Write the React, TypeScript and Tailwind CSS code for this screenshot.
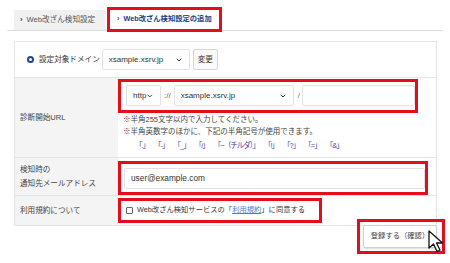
import React from "react";
import { ChevronDown } from "lucide-react";

const font = {
  fontFamily: '"Liberation Sans", "Noto Sans CJK JP", sans-serif',
};

function Select({ value, className }: { value: string; className: string }) {
  return (
    <div
      className={`flex items-center justify-between bg-white border border-[#e2e2e2] rounded-[2px] px-[6px] text-[8px] text-[#333] ${className}`}
    >
      <span>{value}</span>
      <ChevronDown className="w-[8px] h-[8px] text-[#333]" strokeWidth={3} />
    </div>
  );
}

function Cursor() {
  return (
    <svg
      className="absolute left-[428px] top-[230px]"
      width="18"
      height="24"
      viewBox="0 0 18 24"
    >
      <path
        d="M1 1 L1 18 L5.5 14 L9 21.5 L12 20 L8.5 13 L14.5 13 Z"
        fill="#fff"
        stroke="#111"
        strokeWidth="1.3"
        strokeLinejoin="round"
      />
    </svg>
  );
}

const symbols = [".", "-", "_", "/", "~（チルダ）", "!", "?", "=", "&"];

export default function App() {
  return (
    <div
      className="relative w-[450px] h-[263px] bg-white overflow-hidden text-[#444]"
      style={font}
    >
      {/* tabs */}
      <div className="mt-[10px] mx-[7px] h-[21px] flex items-end border-b border-[#dcdcdc] pl-[7px]">
        <div className="w-[92px] h-[20px] bg-[#f1f1f1] flex items-center pl-[6px] gap-[4px] text-[7.6px] text-[#555] whitespace-nowrap">
          <span className="text-[#24408a] font-bold">›</span>
          <span>Web改ざん検知設定</span>
        </div>
        <div className="ml-px w-[115px] flex-none h-[25px] -mb-[2px] border-[3px] border-[#e60d1a] bg-white flex items-center pl-[7px] gap-[4px] text-[7.3px] font-bold text-[#1e3d80] whitespace-nowrap">
          <span>›</span>
          <span>Web改ざん検知設定の追加</span>
        </div>
      </div>

      {/* panel */}
      <div className="mt-[10px] ml-[14px] w-[423px] border border-[#e4e4e4]">
        <div className="h-[35px] flex items-center pl-[12px]">
          <span className="w-[7px] h-[7px] rounded-full border-[2px] border-[#1f4690]" />
          <span className="ml-[5px] text-[7.6px] text-[#333]">設定対象ドメイン</span>
          <Select value="xsample.xsrv.jp" className="ml-[2px] w-[88px] h-[21px]" />
          <div className="ml-[3px] w-[25px] h-[21px] border border-[#d6d6d6] rounded-[2px] bg-[#fafafa] flex items-center justify-center text-[7.6px] text-[#333]">
            変更
          </div>
        </div>

        <div className="grid grid-cols-[103px_1fr] border-t border-[#e4e4e4]">
          {/* row 1 */}
          <div className="bg-[#f4f4f4] flex items-center pl-[5px] text-[7.6px] border-b border-[#e4e4e4]">
            診断開始URL
          </div>
          <div className="pt-px pb-[5px] border-b border-[#e4e4e4]">
            <div className="w-[300px] border-[3px] border-[#e60d1a] flex items-center pl-[5px] pt-[3px] pb-[4px]">
              <Select value="http" className="w-[35px] h-[21px]" />
              <span className="ml-[3px] text-[8px] text-[#666]">://</span>
              <Select value="xsample.xsrv.jp" className="ml-[3px] w-[120px] h-[21px]" />
              <span className="ml-[4px] text-[8px] text-[#666]">/</span>
              <div className="ml-[2px] w-[113px] h-[21px] border border-[#e2e2e2] rounded-[2px]" />
            </div>
            <div className="pl-[5px] text-[7.5px] leading-[12px] text-[#444] pt-[1px]">
              <div>※半角255文字以内で入力してください。</div>
              <div>※半角英数字のほかに、下記の半角記号が使用できます。</div>
              <div className="pl-[12px] flex gap-[5px] text-[#4b3f9e] pt-[2px] whitespace-nowrap">
                {symbols.map((s) => (
                  <span key={s} className="tracking-[-1px]">
                    「{s}」
                  </span>
                ))}
              </div>
            </div>
          </div>

          {/* row 2 */}
          <div className="bg-[#f4f4f4] flex flex-col justify-center pl-[5px] text-[7.6px] leading-[14px] border-b border-[#e4e4e4]">
            <span>検知時の</span>
            <span>通知先メールアドレス</span>
          </div>
          <div className="pt-[3px] border-b border-[#e4e4e4]">
            <div className="w-[310px] h-[34px] border-[3px] border-[#e60d1a] pl-[3px] pt-[4px]">
              <div className="w-[301px] h-[21px] border border-[#e2e2e2] rounded-[2px] flex items-center pl-[6px] text-[8.3px] text-[#333]">
                user@example.com
              </div>
            </div>
          </div>

          {/* row 3 */}
          <div className="bg-[#f4f4f4] flex items-center pl-[5px] text-[7.6px] h-[29px]">
            利用規約について
          </div>
          <div className="pt-[2px]">
            <div className="w-[204px] h-[25px] border-[3px] border-[#e60d1a] flex items-center pl-[5px] text-[7.3px] text-[#333] whitespace-nowrap">
              <span className="w-[7px] h-[7px] flex-none border border-[#666] rounded-[1px] bg-white" />
              <span className="ml-[4px]">
                Web改ざん検知サービスの「
                <span className="text-[#3d7fd1] underline">利用規約</span>
                」に同意する
              </span>
            </div>
          </div>
        </div>
      </div>

      {/* submit */}
      <div className="flex justify-end pr-[5px] -mt-[7px]">
        <div className="w-[88px] h-[35px] border-[3px] border-[#e60d1a] flex items-center justify-end pr-[5px]">
          <div className="w-[74px] h-[23px] bg-white border border-[#d0d0d0] rounded-[2px] shadow-[0_1px_2px_rgba(0,0,0,0.15)] flex items-center justify-center text-[7.3px] text-[#444] whitespace-nowrap">
            登録する（確認）
          </div>
        </div>
      </div>

      <Cursor />
    </div>
  );
}
